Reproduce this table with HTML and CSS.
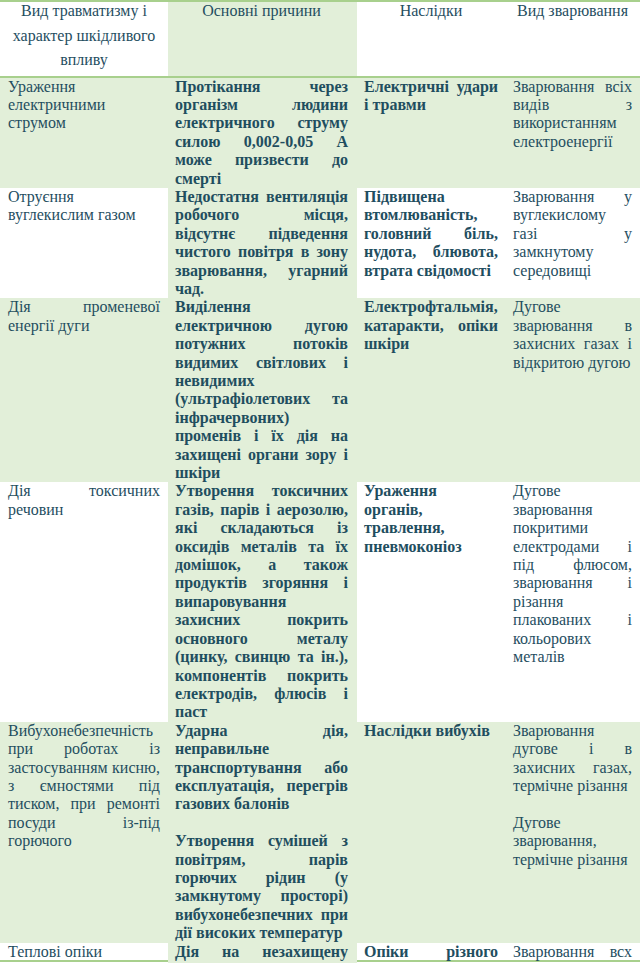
FILE: index.html
```html
<!DOCTYPE html>
<html lang="uk">
<head>
<meta charset="utf-8">
<title>Вид травматизму</title>
<link rel="stylesheet" href="styles.css">
</head>
<body>
<table class="grid">
  <colgroup>
    <col class="w1"><col class="w2"><col class="w3"><col class="w4">
  </colgroup>
  <thead>
    <tr>
      <th class="c1"><div class="hd">Вид травматизму і характер шкідливого впливу</div></th>
      <th class="c2 g"><div class="hd">Основні причини</div></th>
      <th class="c3"><div class="hd">Наслідки</div></th>
      <th class="c4"><div class="hd">Вид зварювання</div></th>
    </tr>
  </thead>
  <tbody>
    <tr class="band">
      <td class="c1">Ураження електричними струмом</td>
      <td class="c2 g b">Протікання через організм людини електричного струму силою 0,002-0,05 А може призвести до смерті</td>
      <td class="c3 b">Електричні удари і травми</td>
      <td class="c4">Зварювання всіх видів з використанням електроенергії</td>
    </tr>
    <tr>
      <td class="c1">Отруєння вуглекислим газом</td>
      <td class="c2 g b">Недостатня вентиляція робочого місця, відсутнє підведення чистого повітря в зону зварювання, угарний чад.</td>
      <td class="c3 b">Підвищена втомлюваність, головний біль, нудота, блювота, втрата свідомості</td>
      <td class="c4">Зварювання у вуглекислому газі у замкнутому середовищі</td>
    </tr>
    <tr class="band">
      <td class="c1">Дія променевої енергії дуги</td>
      <td class="c2 g b">Виділення електричною дугою потужних потоків видимих світлових і невидимих (ультрафіолетових та інфрачервоних) променів і їх дія на захищені органи зору і шкіри</td>
      <td class="c3 b">Електрофтальмія, катаракти, опіки шкіри</td>
      <td class="c4">Дугове зварювання в захисних газах і відкритою дугою</td>
    </tr>
    <tr>
      <td class="c1">Дія токсичних речовин</td>
      <td class="c2 g b">Утворення токсичних газів, парів і аерозолю, які складаються із оксидів металів та їх домішок, а також продуктів згоряння і випаровування захисних покрить основного металу (цинку, свинцю та ін.), компонентів покрить електродів, флюсів і паст</td>
      <td class="c3 b">Ураження органів, травлення, пневмоконіоз</td>
      <td class="c4">Дугове зварювання покритими електродами і під флюсом, зварювання і різання плакованих і кольорових металів</td>
    </tr>
    <tr class="band">
      <td class="c1">Вибухонебезпечність при роботах із застосуванням кисню, з ємностями під тиском, при ремонті посуди із-під горючого</td>
      <td class="c2 g b"><p>Ударна дія, неправильне транспортування або експлуатація, перегрів газових балонів</p><p class="blank"></p><p>Утворення сумішей з повітрям, парів горючих рідин (у замкнутому просторі) вибухонебезпечних при дії високих температур</p></td>
      <td class="c3 b">Наслідки вибухів</td>
      <td class="c4"><p>Зварювання дугове і в захисних газах, термічне різання</p><p class="blank"></p><p>Дугове зварювання, термічне різання</p></td>
    </tr>
    <tr class="last">
      <td class="c1 cut">Теплові опіки</td>
      <td class="c2 g b full">Дія на незахищену</td>
      <td class="c3 b full cut">Опіки різного</td>
      <td class="c4 full cut">Зварювання всх</td>
    </tr>
  </tbody>
</table>
</body>
</html>
```
FILE: styles.css
```css
html, body {
  margin: 0;
  padding: 0;
  background: #ffffff;
}
body {
  font-family: "Liberation Serif", "Times New Roman", serif;
  color: #1f4e5f;
}
.grid {
  width: 640px;
  border-collapse: collapse;
  table-layout: fixed;
  font-size: 16px;
  line-height: 18.4px;
}
.w1 { width: 168px; }
.w2 { width: 189px; }
.w3 { width: 150px; }
.w4 { width: 133px; }

th, td {
  vertical-align: top;
  padding: 0 9px 0 7px;
  text-align: justify;
}
th {
  font-weight: normal;
  text-align: center;
  border-top: 2px solid #a8d08d;
  border-bottom: 2px solid #a8d08d;
}
.hd {
  line-height: 24.5px;
  margin-top: -3px;
  padding-bottom: 3px;
}
.c1 { padding-left: 8px; padding-right: 8px; }
.c4 { padding-left: 6px; padding-right: 8px; }

.g { background: #e2efd9; }
.band td { background: #e2efd9; }
.b { font-weight: bold; }

td p { margin: 0; }
td p.blank { height: 18.4px; }

.last td { height: 22px; }
.full { text-align-last: justify; }
.cut {
  background: linear-gradient(#a8d08d, #a8d08d) 0 17px / 100% 2px no-repeat;
}
.last td.c1 { text-align: left; }
```
